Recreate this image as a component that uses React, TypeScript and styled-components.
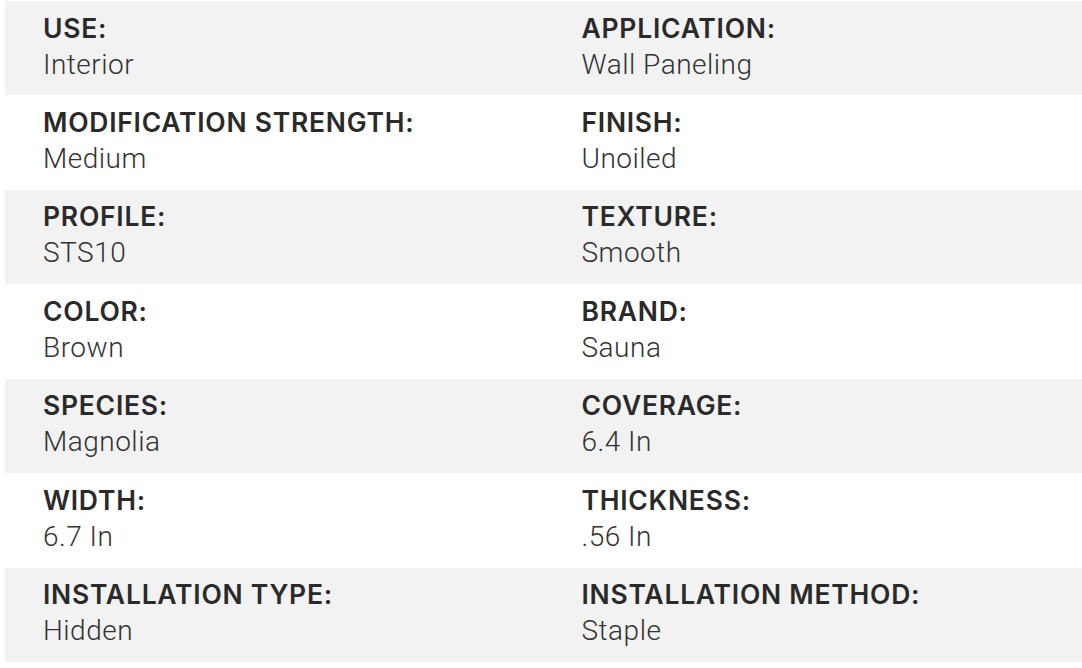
import React from "react";
import styled, { createGlobalStyle } from "styled-components";

const Global = createGlobalStyle`
  html, body { margin: 0; padding: 0; background: #ffffff; }
  body { font-family: Inter, "Liberation Sans", Arial, sans-serif; }
`;

const Table = styled.div`
  display: flex;
  flex-direction: column;
  padding: 1px 0 0 5px;
`;

const Row = styled.div<{ $shaded: boolean }>`
  display: grid;
  grid-template-columns: 1fr 1fr;
  height: 94.43px;
  box-sizing: border-box;
  background: ${(p) => (p.$shaded ? "#f2f2f2" : "#ffffff")};
`;

const Cell = styled.div`
  display: flex;
  flex-direction: column;
  padding: 8.5px 38px 0 38px;
`;

const Label = styled.div`
  font-family: Inter, "Liberation Sans", Arial, sans-serif;
  font-size: 26.5px;
  font-weight: 600;
  line-height: 37px;
  color: #2a2a2a;
  letter-spacing: 0.75px;
  white-space: nowrap;
`;

const Value = styled.div`
  font-family: Roboto, "Liberation Sans", Arial, sans-serif;
  font-size: 28px;
  font-weight: 300;
  line-height: 36px;
  color: #333333;
  letter-spacing: 0.5px;
  white-space: nowrap;
`;

const rows: [string, string, string, string][] = [
  ["USE:", "Interior", "APPLICATION:", "Wall Paneling"],
  ["MODIFICATION STRENGTH:", "Medium", "FINISH:", "Unoiled"],
  ["PROFILE:", "STS10", "TEXTURE:", "Smooth"],
  ["COLOR:", "Brown", "BRAND:", "Sauna"],
  ["SPECIES:", "Magnolia", "COVERAGE:", "6.4 In"],
  ["WIDTH:", "6.7 In", "THICKNESS:", ".56 In"],
  ["INSTALLATION TYPE:", "Hidden", "INSTALLATION METHOD:", "Staple"],
];

export default function App() {
  return (
    <>
      <Global />
      <Table>
        {rows.map((r, i) => (
          <Row key={i} $shaded={i % 2 === 0}>
            <Cell>
              <Label>{r[0]}</Label>
              <Value>{r[1]}</Value>
            </Cell>
            <Cell>
              <Label>{r[2]}</Label>
              <Value>{r[3]}</Value>
            </Cell>
          </Row>
        ))}
      </Table>
    </>
  );
}
